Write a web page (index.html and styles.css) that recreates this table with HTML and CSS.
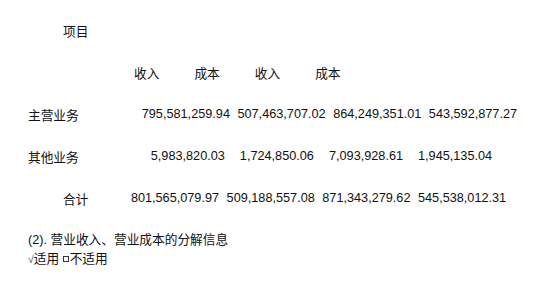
FILE: index.html
```
<!DOCTYPE html>
<html lang="zh">
<head>
<meta charset="utf-8">
<link rel="stylesheet" href="styles.css">
</head>
<body>
<div class="page">
  <div class="row indent-label"><span class="label">项目</span></div>
  <div class="row head">
    <span>收入</span><span>成本</span><span>收入</span><span>成本</span>
  </div>
  <div class="row r1">
    <span class="label">主营业务</span>
    <span class="nums"><span>795,581,259.94</span><span>507,463,707.02</span><span>864,249,351.01</span><span>543,592,877.27</span></span>
  </div>
  <div class="row r2">
    <span class="label">其他业务</span>
    <span class="nums"><span>5,983,820.03</span><span>1,724,850.06</span><span>7,093,928.61</span><span>1,945,135.04</span></span>
  </div>
  <div class="row r3">
    <span class="label">合计</span>
    <span class="nums"><span>801,565,079.97</span><span>509,188,557.08</span><span>871,343,279.62</span><span>545,538,012.31</span></span>
  </div>
  <div class="notes">
    <p>(2). 营业收入、营业成本的分解信息</p>
    <p><span class="tick">√</span>适用 <span class="box"></span>不适用</p>
  </div>
</div>
</body>
</html>
```

FILE: styles.css
```
html, body {
  margin: 0;
  padding: 0;
  background: #fff;
}
.page {
  padding-top: 9px;
  font-family: "Liberation Sans", "Noto Sans CJK SC", sans-serif;
  font-size: 12.7px;
  color: #111;
}
.row {
  display: flex;
  align-items: center;
  height: 42px;
  white-space: nowrap;
}
.indent-label {
  padding-left: 63px;
}
.head {
  padding-left: 134px;
  gap: 35px;
}
.nums {
  display: flex;
  font-size: 12.7px;
}
.r1 {
  padding-left: 28px;
}
.r1 .nums {
  margin-left: 63px;
  gap: 7.5px;
}
.r2 {
  padding-left: 28px;
}
.r2 .nums {
  margin-left: 72px;
  gap: 15px;
}
.r3 {
  padding-left: 63px;
}
.r3 .nums {
  margin-left: 42.5px;
  gap: 7.5px;
}
.notes {
  padding-left: 28px;
  margin-top: 12px;
}
.notes p {
  margin: 0;
  line-height: 19px;
}
.tick {
  font-size: 10.5px;
  color: #444;
}
.box {
  display: inline-block;
  width: 4px;
  height: 4px;
  border: 1px solid #333;
  margin-right: 1px;
  vertical-align: 1px;
}
```
